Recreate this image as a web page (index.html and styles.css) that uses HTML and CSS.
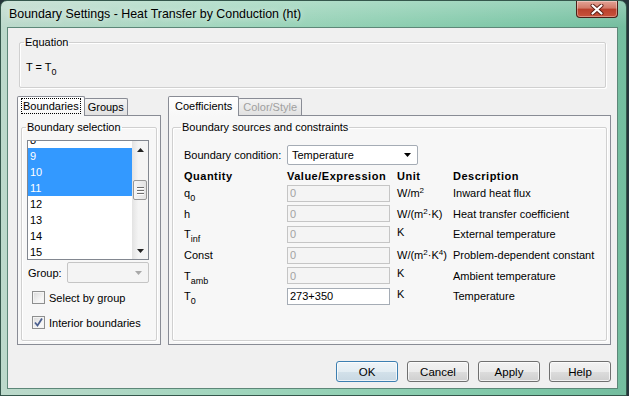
FILE: index.html
```html
<!DOCTYPE html>
<html lang="en">
<head>
    <meta charset="UTF-8">
    <title>Boundary Settings - Heat Transfer by Conduction (ht)</title>
    <link rel="stylesheet" href="styles.css">
</head>
<body>
    <div class="window">
        <div class="titlebar">
            <span class="title">Boundary Settings - Heat Transfer by Conduction (ht)</span>
            <button class="close" type="button">
                <svg width="14" height="11" viewBox="0 0 14 11">
                    <path d="M2.5 1.5 L11.5 9.5 M11.5 1.5 L2.5 9.5" stroke="#5a1d14" stroke-width="4" stroke-linecap="round"/>
                    <path d="M2.5 1.5 L11.5 9.5 M11.5 1.5 L2.5 9.5" stroke="#fff" stroke-width="2.2" stroke-linecap="round"/>
                </svg>
            </button>
        </div>

        <div class="client">
            <fieldset class="group equation">
                <legend>Equation</legend>
                <div class="eq">T = T<sub>0</sub></div>
            </fieldset>

            <div class="tabs-row">
                <div class="tabctl side">
                    <div class="tabstrip">
                        <div class="tab active"><span class="focus">Boundaries</span></div>
                        <div class="tab">Groups</div>
                    </div>
                    <div class="panel">
                        <fieldset class="group selection">
                            <legend>Boundary selection</legend>
                            <div class="listbox">
                                <ul class="items">
                                    <li>8</li>
                                    <li class="on">9</li>
                                    <li class="on">10</li>
                                    <li class="on">11</li>
                                    <li>12</li>
                                    <li>13</li>
                                    <li>14</li>
                                    <li>15</li>
                                </ul>
                                <div class="vscroll">
                                    <div class="sb-btn">
                                        <svg width="7" height="4" viewBox="0 0 7 4"><polygon points="0,4 3.5,0 7,4" fill="#222"/></svg>
                                    </div>
                                    <div class="sb-gap"></div>
                                    <div class="sb-thumb"><i></i><i></i><i></i></div>
                                    <div class="sb-fill"></div>
                                    <div class="sb-btn">
                                        <svg width="7" height="4" viewBox="0 0 7 4"><polygon points="0,0 7,0 3.5,4" fill="#222"/></svg>
                                    </div>
                                </div>
                            </div>
                            <div class="grouprow">
                                <span class="grouplabel">Group:</span>
                                <div class="combo disabled">
                                    <svg width="7" height="4" viewBox="0 0 7 4"><polygon points="0,0 7,0 3.5,4" fill="#a8a8a8"/></svg>
                                </div>
                            </div>
                            <label class="check first"><span class="box"></span>Select by group</label>
                            <label class="check"><span class="box">
                                <svg width="11" height="11" viewBox="0 0 11 11"><path d="M2 5.5 L4.5 8.5 L9 1.5" fill="none" stroke="#4b5f8f" stroke-width="1.8"/></svg>
                            </span>Interior boundaries</label>
                        </fieldset>
                    </div>
                </div>

                <div class="tabctl main">
                    <div class="tabstrip">
                        <div class="tab active">Coefficients</div>
                        <div class="tab off">Color/Style</div>
                    </div>
                    <div class="panel">
                        <fieldset class="group coefs">
                            <legend>Boundary sources and constraints</legend>
                            <div class="bcrow">
                                <span class="bclabel">Boundary condition:</span>
                                <div class="combo select">
                                    <span>Temperature</span>
                                    <svg width="7" height="4" viewBox="0 0 7 4"><polygon points="0,0 7,0 3.5,4" fill="#000"/></svg>
                                </div>
                            </div>
                            <div class="qtable">
                                <div class="th">Quantity</div>
                                <div class="th">Value/Expression</div>
                                <div class="th">Unit</div>
                                <div class="th">Description</div>

                                <div>q<sub>0</sub></div>
                                <div><input type="text" value="0" disabled></div>
                                <div>W/m<sup>2</sup></div>
                                <div>Inward heat flux</div>

                                <div>h</div>
                                <div><input type="text" value="0" disabled></div>
                                <div>W/(m<sup>2</sup>·K)</div>
                                <div>Heat transfer coefficient</div>

                                <div>T<sub>inf</sub></div>
                                <div><input type="text" value="0" disabled></div>
                                <div class="up">K</div>
                                <div>External temperature</div>

                                <div>Const</div>
                                <div><input type="text" value="0" disabled></div>
                                <div>W/(m<sup>2</sup>·K<sup>4</sup>)</div>
                                <div>Problem-dependent constant</div>

                                <div>T<sub>amb</sub></div>
                                <div><input type="text" value="0" disabled></div>
                                <div class="up">K</div>
                                <div>Ambient temperature</div>

                                <div>T<sub>0</sub></div>
                                <div><input type="text" value="273+350"></div>
                                <div class="up">K</div>
                                <div>Temperature</div>
                            </div>
                        </fieldset>
                    </div>
                </div>
            </div>

            <div class="buttons">
                <button class="btn default" type="button">OK</button>
                <button class="btn" type="button">Cancel</button>
                <button class="btn" type="button">Apply</button>
                <button class="btn" type="button">Help</button>
            </div>
        </div>
    </div>
</body>
</html>
```

FILE: styles.css
```css
* {
    box-sizing: border-box;
}
body {
    margin: 0;
    background: #26343a;
    font-family: 'Liberation Sans', Arial, sans-serif;
    font-size: 11px;
    color: #000;
}
.window {
    width: 627px;
    height: 396px;
    display: flex;
    flex-direction: column;
    padding: 0 8px 6px 6px;
    border: 1px solid #35574c;
    border-radius: 7px 7px 0 0;
    background:
        linear-gradient(180deg, rgba(255,255,255,0.25), rgba(255,255,255,0) 26px),
        linear-gradient(90deg, #bcd9cb 0%, #a2d6be 35%, #8fcfb2 60%, #7cc6a6 85%, #74bd9f 100%);
}
.titlebar {
    height: 26px;
    display: flex;
    align-items: center;
}
.title {
    margin-left: 2px;
    font-size: 12.4px;
    color: #000;
    text-shadow: 0 0 6px rgba(255,255,255,0.8);
}
.close {
    align-self: flex-start;
    margin-left: auto;
    width: 42px;
    height: 17px;
    padding: 0;
    display: flex;
    align-items: center;
    justify-content: center;
    border: 1px solid #4b1f17;
    border-top: none;
    border-radius: 0 0 4px 4px;
    background: linear-gradient(180deg, #e3a396 0%, #d27a68 45%, #b9402c 50%, #c9533b 100%);
    box-shadow: inset 0 0 0 1px rgba(255,255,255,0.35);
}
.client {
    flex: 1;
    display: flex;
    flex-direction: column;
    background: #f0f0f0;
    border: 1px solid #5d8778;
    padding: 8px 6px 0 9px;
}

/* group boxes */
.group {
    margin: 0;
    padding: 0;
    min-width: 0;
    border: 1px solid #d0d0d0;
    border-radius: 2px;
    box-shadow: inset 1px 1px 0 #fff, 1px 1px 0 #fff;
}
.group legend {
    padding: 0 1px;
    line-height: 13px;
}
.equation {
    margin: 0 5px 0 2px;
    padding: 12px 6px 13px;
}
.equation legend {
    margin-left: -2px;
}
.eq {
    line-height: 13px;
}
sub {
    font-size: 9px;
    vertical-align: -4px;
    line-height: 0;
}
sup {
    font-size: 8px;
    vertical-align: 4px;
    line-height: 0;
}

/* tabs */
.tabs-row {
    display: flex;
    gap: 7px;
    margin-top: 8px;
}
.tabctl {
    display: flex;
    flex-direction: column;
}
.tabctl.side {
    width: 144px;
}
.tabctl.main {
    flex: 1;
}
.tabstrip {
    height: 19px;
    display: flex;
    align-items: flex-end;
}
.tab {
    height: 17px;
    line-height: 16px;
    padding: 0 3px;
    margin-left: -1px;
    border: 1px solid #898c95;
    border-bottom: none;
    border-radius: 2px 2px 0 0;
    background: linear-gradient(180deg, #f4f4f4, #e1e1e1);
}
.tab:first-child {
    margin-left: 0;
}
.tab.active {
    position: relative;
    z-index: 1;
    height: 20px;
    margin-bottom: -1px;
    padding: 0 4px;
    line-height: 18px;
    background: linear-gradient(180deg, #ffffff, #f7f7f7);
}
.main .tab.active {
    padding: 0 6px;
}
.tab.off {
    color: #a0a0a0;
    padding: 0 4px;
}
.focus {
    outline: 1px dotted #000;
    padding: 1px 1px;
}
.panel {
    height: 230px;
    display: flex;
    flex-direction: column;
    border: 1px solid #898c95;
    background: #f7f7f7;
}

/* boundary selection */
.selection {
    flex: 1;
    margin: 5px 3px 3px;
    padding: 6px 0 0 5px;
    display: flex;
    flex-direction: column;
    align-items: flex-start;
}
.selection legend {
    margin-left: -1px;
}
.listbox {
    width: 122px;
    height: 120px;
    display: flex;
    border: 1px solid #828790;
    background: #fff;
    overflow: hidden;
}
.items {
    flex: 1;
    list-style: none;
    margin: -9px 0 0;
    padding: 0;
}
.items li {
    height: 16px;
    line-height: 16px;
    padding-left: 2px;
}
.items li.on {
    background: #3399ff;
    color: #fff;
}
.vscroll {
    width: 16px;
    display: flex;
    flex-direction: column;
    background: linear-gradient(90deg, #e3e3e3, #f4f4f4 40%, #f4f4f4);
}
.sb-btn {
    height: 17px;
    display: flex;
    align-items: center;
    justify-content: center;
}
.sb-gap {
    height: 22px;
}
.sb-thumb {
    height: 20px;
    margin: 0 1px;
    display: flex;
    flex-direction: column;
    align-items: center;
    justify-content: center;
    gap: 2px;
    border: 1px solid #979797;
    border-radius: 2px;
    background: linear-gradient(90deg, #f6f6f6, #e2e2e2);
}
.sb-thumb i {
    width: 7px;
    height: 1px;
    background: #6e6e6e;
    box-shadow: 0 1px 0 #fff;
}
.sb-fill {
    flex: 1;
}
.grouprow {
    margin-top: 2px;
    padding-left: 1px;
    display: flex;
    align-items: center;
}
.grouplabel {
    width: 39px;
}
.combo {
    height: 21px;
    display: flex;
    align-items: center;
    border: 1px solid #c5c5c5;
    border-radius: 2px;
}
.combo.disabled {
    width: 82px;
    justify-content: flex-end;
    padding-right: 6px;
    background: #f4f4f4;
}
.check {
    display: flex;
    align-items: center;
    gap: 4px;
    height: 13px;
    margin-top: 12px;
    margin-left: 5px;
}
.check.first {
    margin-top: 8px;
}
.box {
    width: 13px;
    height: 13px;
    display: flex;
    align-items: center;
    justify-content: center;
    border: 1px solid #8e8f8f;
    background: linear-gradient(135deg, #d9d9d9, #f7f7f7 70%);
    box-shadow: inset 0 0 0 1px #f4f4f4;
}

/* coefficients */
.coefs {
    flex: 1;
    margin: 5px 3px 3px;
    padding: 11px 0 0 11px;
}
.coefs legend {
    margin-left: -3px;
}
.bcrow {
    display: flex;
    align-items: center;
}
.bclabel {
    width: 103px;
}
.combo.select {
    width: 131px;
    height: 20px;
    padding: 0 6px 0 4px;
    justify-content: space-between;
    border-color: #a5acb5;
    background: #fff;
}
.qtable {
    margin-top: 3px;
    display: grid;
    grid-template-columns: 103px 110px 56px auto;
    grid-template-rows: 15px repeat(6, 20.6px);
    align-items: center;
}
.th {
    font-weight: bold;
    letter-spacing: 0.5px;
}
.qtable .up {
    align-self: start;
    padding-top: 2px;
}
.qtable input {
    display: block;
    width: 103px;
    height: 17px;
    margin: 0;
    padding: 0 2px;
    font: 11px 'Liberation Sans', Arial, sans-serif;
    color: #000;
    background: #fff;
    border: 1px solid #a5acb5;
    outline: none;
}
.qtable input:disabled {
    color: #a3a3a3;
    background: #f4f4f4;
    border-color: #c5c5c5;
}

/* dialog buttons */
.buttons {
    margin-top: 16px;
    display: flex;
    justify-content: flex-end;
    gap: 9px;
}
.btn {
    width: 62px;
    height: 21px;
    padding: 0;
    font: 11.5px 'Liberation Sans', Arial, sans-serif;
    color: #000;
    border: 1px solid #707070;
    border-radius: 3px;
    background: linear-gradient(180deg, #f2f2f2 0%, #ebebeb 50%, #dddddd 51%, #cfcfcf 100%);
    box-shadow: inset 0 0 0 1px rgba(255,255,255,0.7);
}
.btn.default {
    border-color: #3c7fb1;
    background: linear-gradient(180deg, #eef4f8 0%, #e3edf3 50%, #d3e1ea 51%, #c8d8e3 100%);
}
```
